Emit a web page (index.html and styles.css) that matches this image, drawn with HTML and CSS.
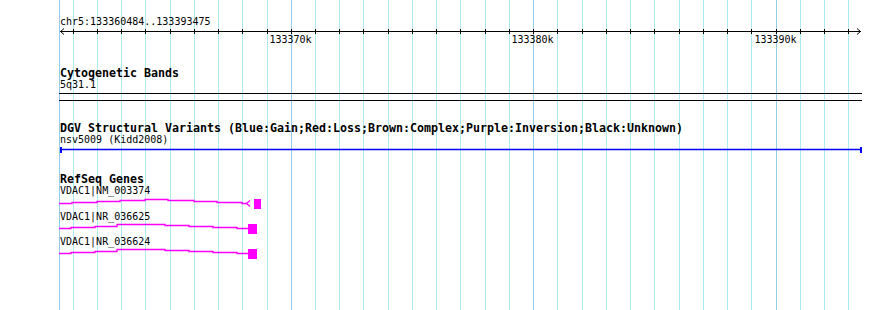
FILE: index.html
```html
<!DOCTYPE html>
<html lang="en">
<head>
    <meta charset="UTF-8">
    <title>chr5:133360484..133393475</title>
    <link rel="stylesheet" href="styles.css">
</head>
<body>
    <div class="panel">
        <!-- grid behind all tracks -->
        <svg class="grid" width="890" height="310">
            <path class="major" d="M59.5 0v310M291.5 0v310M533.5 0v310M776.5 0v310"/>
            <path class="minor" d="M73.5 0v310M97.5 0v310M121.5 0v310M145.5 0v310M170.5 0v310M194.5 0v310M218.5 0v310M242.5 0v310M267.5 0v310
                M315.5 0v310M339.5 0v310M363.5 0v310M388.5 0v310M412.5 0v310M436.5 0v310M460.5 0v310M485.5 0v310M509.5 0v310
                M557.5 0v310M582.5 0v310M606.5 0v310M630.5 0v310M654.5 0v310M679.5 0v310M703.5 0v310M727.5 0v310M751.5 0v310
                M800.5 0v310M824.5 0v310M848.5 0v310"/>
        </svg>

        <div class="tracks">
            <section class="track ruler-track">
                <div class="label">chr5:133360484..133393475</div>
                <svg class="glyph" width="890" height="20">
                    <path class="ink" d="M60 3.5H861"/>
                    <polyline class="ink" points="64,0.5 60.5,3.5 64,6.5"/>
                    <polyline class="ink" points="857,0.5 860.5,3.5 857,6.5"/>
                    <path class="ink" d="M73.5 1v5M97.5 1v5M121.5 1v5M145.5 1v5M170.5 1v5M194.5 1v5M218.5 1v5M242.5 1v5M267.5 1v5M291.5 1v5
                        M315.5 1v5M339.5 1v5M363.5 1v5M388.5 1v5M412.5 1v5M436.5 1v5M460.5 1v5M485.5 1v5M509.5 1v5M533.5 1v5
                        M557.5 1v5M582.5 1v5M606.5 1v5M630.5 1v5M654.5 1v5M679.5 1v5M703.5 1v5M727.5 1v5M751.5 1v5M776.5 1v5
                        M800.5 1v5M824.5 1v5M848.5 1v5"/>
                    <text class="tick-label" x="290.5" y="15">133370k</text>
                    <text class="tick-label" x="532.5" y="15">133380k</text>
                    <text class="tick-label" x="775.5" y="15">133390k</text>
                </svg>
            </section>

            <section class="track">
                <div class="title">Cytogenetic Bands</div>
                <div class="label">5q31.1</div>
                <svg class="glyph" width="890" height="12">
                    <path class="ink" d="M59 2.5H862M59 9.5H862"/>
                </svg>
            </section>

            <section class="track">
                <div class="title">DGV Structural Variants (Blue:Gain;Red:Loss;Brown:Complex;Purple:Inversion;Black:Unknown)</div>
                <div class="label">nsv5009 (Kidd2008)</div>
                <svg class="glyph" width="890" height="8">
                    <path class="gain" d="M60 3.5H861"/>
                    <rect class="gain-fill" x="60" y="1" width="2" height="6"/>
                    <rect class="gain-fill" x="860" y="1" width="2" height="6"/>
                </svg>
            </section>

            <section class="track">
                <div class="title">RefSeq Genes</div>
                <div class="label">VDAC1|NM_003374</div>
                <svg class="glyph" width="890" height="14">
                    <path class="gene" d="M59 6.5H72V5.5H97V4.5H120V3.5H145V2.5H168V3.5H194V4.5H217V5.5H242V6.5H247"/>
                    <polyline class="gene" points="250,3.5 246.5,6.5 250,9.5"/>
                    <rect class="exon" x="254" y="2" width="7" height="10"/>
                </svg>
                <div class="label">VDAC1|NR_036625</div>
                <svg class="glyph" width="890" height="13">
                    <path class="gene" d="M59 5.5H71V4.5H95V3.5H117V1.5H165V2.5H189V3.5H213V4.5H237V5.5H248"/>
                    <rect class="exon" x="248" y="1" width="9" height="10"/>
                </svg>
                <div class="label">VDAC1|NR_036624</div>
                <svg class="glyph" width="890" height="13">
                    <path class="gene" d="M59 5.5H71V4.5H95V3.5H117V1.5H165V2.5H189V3.5H213V4.5H237V5.5H248"/>
                    <rect class="exon" x="248" y="1" width="9" height="10"/>
                </svg>
            </section>
        </div>
    </div>
</body>
</html>
```

FILE: styles.css
```css
body {
    margin: 0;
    padding: 0;
    background: #fff;
    color: #000;
    font-family: "DejaVu Sans Mono", monospace;
}

.panel {
    position: relative;
    width: 890px;
    height: 310px;
    overflow: hidden;
}

/* grid sits under the tracks */
.grid {
    position: absolute;
    top: 0;
    left: 0;
}

.grid path {
    fill: none;
    stroke-width: 1;
}

.grid .minor {
    stroke: #ade9f0;
}

.grid .major {
    stroke: #93cbea;
}

.tracks {
    position: relative;
}

.ruler-track {
    padding-top: 16px;
}

.track + .track {
    margin-top: 19px;
}

/* 6px per character, like the small bitmap font */
.label {
    height: 12px;
    padding-left: 60px;
    font-size: 10px;
    line-height: 12px;
    white-space: nowrap;
}

.title {
    height: 12px;
    padding-left: 60px;
    font-size: 11.63px;
    font-weight: bold;
    line-height: 12px;
    white-space: nowrap;
}

.glyph {
    display: block;
}

.ink {
    fill: none;
    stroke: #000;
    stroke-width: 1;
}

.tick-label {
    font-family: "DejaVu Sans Mono", monospace;
    font-size: 10px;
    text-anchor: middle;
    fill: #000;
}

.gain {
    fill: none;
    stroke: #0000ee;
    stroke-width: 1.3;
}

.gain-fill {
    fill: #0000ee;
}

.gene {
    fill: none;
    stroke: #ff00ff;
    stroke-width: 1.3;
}

.exon {
    fill: #ff00ff;
}
```
